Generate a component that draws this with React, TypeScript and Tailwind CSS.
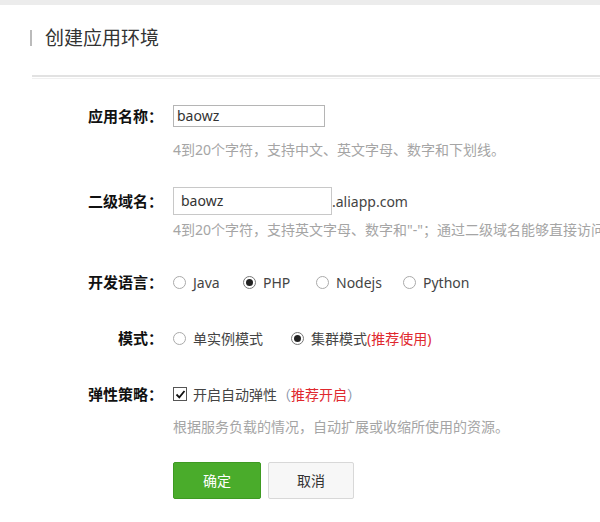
import React from 'react';

const font = { fontFamily: '"Noto Sans", "Noto Sans CJK SC", sans-serif' };

function Radio({ checked, label, className }: { checked?: boolean; label: React.ReactNode; className?: string }) {
  return (
    <label className={`flex items-center gap-[7px] ${className ?? ''}`}>
      <span
        className={`w-[13px] h-[13px] rounded-full border flex items-center justify-center bg-white ${
          checked ? 'border-[#777]' : 'border-[#aaa]'
        }`}
      >
        {checked && <span className="w-[7px] h-[7px] rounded-full bg-[#222]" />}
      </span>
      <span className="text-[14px] text-[#444]">{label}</span>
    </label>
  );
}

function Row({ label, children, className }: { label: string; children: React.ReactNode; className?: string }) {
  return (
    <div className={`flex items-center ${className ?? ''}`}>
      <div className="w-[163px] text-right text-[15px] font-bold text-[#111] whitespace-nowrap">{label}</div>
      <div className="pl-[10px] flex items-center whitespace-nowrap">{children}</div>
    </div>
  );
}

export default function App() {
  return (
    <div className="w-[600px] h-[522px] overflow-hidden bg-white" style={font}>
      <div className="h-[5px] bg-[#ececec]" />

      {/* title */}
      <div className="pl-[30px] pt-[19px] flex items-center gap-[13px]">
        <span className="w-[2px] h-[16px] bg-[#bbb]" />
        <span className="text-[19px] leading-[28px] text-[#333]">创建应用环境</span>
      </div>
      <div className="ml-[32px] mt-[23px] h-[4px] border-t-2 border-[#e2e2e2] border-b border-b-[#f0f0f0]" />

      {/* form */}
      <Row label="应用名称：" className="mt-[26px] h-[22px]">
        <div className="w-[152px] h-[22px] border border-[#b5b5b5] pl-[3px] text-[14px] leading-[20px] text-[#333]">
          baowz
        </div>
      </Row>
      <div className="pl-[173px] mt-[13px] text-[14px] leading-[20px] text-[#a5a5a5] whitespace-nowrap">
        4到20个字符，支持中文、英文字母、数字和下划线。
      </div>

      <Row label="二级域名：" className="mt-[27px] h-[28px]">
        <div className="w-[159px] h-[28px] border border-[#c8c8c8] pl-[7px] text-[14px] leading-[26px] text-[#333]">
          baowz
        </div>
        <span className="text-[14px] text-[#444]">.aliapp.com</span>
      </Row>
      <div className="pl-[173px] mt-[5px] text-[14px] leading-[20px] text-[#a5a5a5] whitespace-nowrap">
        4到20个字符，支持英文字母、数字和"-"；通过二级域名能够直接访问您的应用
      </div>

      <Row label="开发语言：" className="mt-[32px] h-[20px]">
        <Radio label="Java" className="w-[70px]" />
        <Radio label="PHP" checked className="w-[73px]" />
        <Radio label="Nodejs" className="w-[87px]" />
        <Radio label="Python" />
      </Row>

      <Row label="模式：" className="mt-[36px] h-[20px]">
        <Radio label="单实例模式" className="w-[118px]" />
        <Radio
          checked
          label={
            <>
              集群模式<span className="text-[#e0282e]">(推荐使用)</span>
            </>
          }
        />
      </Row>

      <Row label="弹性策略：" className="mt-[36px] h-[20px]">
        <label className="flex items-center gap-[6px]">
          <span className="w-[14px] h-[14px] border border-[#555] bg-white flex items-center justify-center">
            <svg width="11" height="11" viewBox="0 0 11 11">
              <path d="M1.5 5.5 L4.3 8.3 L9.5 2" fill="none" stroke="#111" strokeWidth="1.8" />
            </svg>
          </span>
          <span className="text-[14px] text-[#444]">
            开启自动弹性<span className="text-[#8a94a8]">（</span>
            <span className="text-[#e0282e]">推荐开启</span>
            <span className="text-[#8a94a8]">）</span>
          </span>
        </label>
      </Row>
      <div className="pl-[173px] mt-[13px] text-[14px] leading-[20px] text-[#a5a5a5] whitespace-nowrap">
        根据服务负载的情况，自动扩展或收缩所使用的资源。
      </div>

      <div className="pl-[173px] mt-[25px] flex gap-[7px]">
        <button className="w-[88px] h-[37px] bg-[#4aac2b] border border-[#3e9a22] rounded-[2px] text-[14px] text-white">
          确定
        </button>
        <button className="w-[86px] h-[37px] bg-[#f7f7f7] border border-[#d8d8d8] rounded-[2px] text-[14px] text-[#333]">
          取消
        </button>
      </div>
    </div>
  );
}
